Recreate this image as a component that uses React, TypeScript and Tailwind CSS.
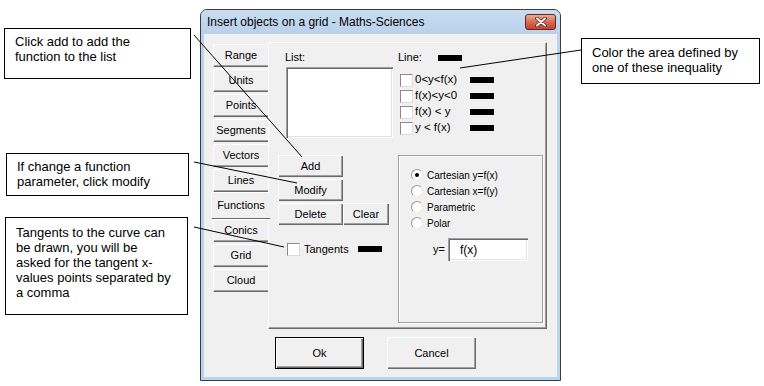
const raised =
  'bg-[#f0f0f0] shadow-[inset_1px_1px_0_#ffffff,inset_-1px_-1px_0_#696969,inset_-2px_-2px_0_#a0a0a0]';
const sunken =
  'bg-white shadow-[inset_1px_1px_0_#a0a0a0,inset_2px_2px_0_#696969,inset_-1px_-1px_0_#ffffff,inset_-2px_-2px_0_#e3e3e3]';

const tabs = ['Range', 'Units', 'Points', 'Segments', 'Vectors', 'Lines', 'Functions', 'Conics', 'Grid', 'Cloud'];

function Callout({ lines, className }: { lines: string[]; className: string }) {
  return (
    <div className={`border border-black bg-white text-[13px] leading-[15px] text-black ${className}`}>
      {lines.map((l) => (
        <div key={l} className="whitespace-nowrap">
          {l}
        </div>
      ))}
    </div>
  );
}

function Check() {
  return <div className="w-[13px] h-[13px] shrink-0 bg-white border border-[#8a8a8a] border-r-[#dcdcdc] border-b-[#dcdcdc]" />;
}

function Swatch({ className = '' }: { className?: string }) {
  return <div className={`w-[24px] h-[6px] bg-black shrink-0 ${className}`} />;
}

function Radio({ checked = false }: { checked?: boolean }) {
  return (
    <div className="w-[12px] h-[12px] shrink-0 rounded-full bg-white border border-[#9a9a9a] border-r-[#e8e8e8] border-b-[#e8e8e8] flex items-center justify-center">
      {checked && <div className="w-[4px] h-[4px] rounded-full bg-black" />}
    </div>
  );
}

function Btn({ label, className = '' }: { label: string; className?: string }) {
  return (
    <div className={`${raised} flex items-center justify-center text-[11px] ${className}`}>{label}</div>
  );
}

export default function App() {
  return (
    <div className="relative w-[764px] h-[386px] bg-white overflow-hidden flex font-['Liberation_Sans',Arial,sans-serif] text-black">
      {/* left callouts */}
      <div className="w-[200px] shrink-0 flex flex-col">
        <Callout
          className="ml-[4px] mt-[28px] w-[187px] h-[51px] pl-[10px] pt-[5px]"
          lines={['Click add to add the', 'function to the list']}
        />
        <Callout
          className="ml-[6px] mt-[74px] w-[183px] h-[43px] pl-[10px] pt-[5px]"
          lines={['If change a function', 'parameter, click modify']}
        />
        <Callout
          className="ml-[5px] mt-[21px] w-[183px] h-[98px] pl-[10px] pt-[7px]"
          lines={['Tangents to the curve can', 'be drawn, you will be', 'asked for the tangent x-', 'values points separated by', 'a comma']}
        />
      </div>

      {/* dialog window */}
      <div className="mt-[9px] w-[361px] h-[372px] shrink-0 flex flex-col border border-[#3b3b3b] rounded-t-[7px] bg-[#bcd3ec]">
        <div className="h-[24px] flex items-center pl-[6px] pr-[4px] bg-gradient-to-b from-[#c9dcf1] to-[#bad1eb] rounded-t-[6px]">
          <span className="text-[12px]">Insert objects on a grid - Maths-Sciences</span>
          <div className="ml-auto w-[31px] h-[16px] rounded-[3px] border border-[#6b2418] bg-gradient-to-b from-[#e9ab98] via-[#d56a53] to-[#c2432f] flex items-center justify-center">
            <svg width="14" height="10" viewBox="0 0 14 10">
              <path d="M3 1.5 L11 8.5 M11 1.5 L3 8.5" stroke="#5a1d14" strokeWidth="3.6" strokeLinecap="round" />
              <path d="M3 1.5 L11 8.5 M11 1.5 L3 8.5" stroke="#ffffff" strokeWidth="2" strokeLinecap="round" />
            </svg>
          </div>
        </div>

        <div className="mx-[3px] mb-[3px] flex-1 bg-[#f0f0f0] flex flex-col">
          <div className="flex items-start pl-[9px] pt-[8px]">
            {/* tabs */}
            <div className="w-[55px] mt-[2px] flex flex-col gap-[2px] shrink-0">
              {tabs.map((t) =>
                t === 'Functions' ? (
                  <div
                    key={t}
                    className="relative z-10 -my-[2px] -ml-[2px] -mr-[2px] h-[27px] bg-[#f0f0f0] border-t border-l border-white border-b border-b-[#696969] rounded-tl-[2px] flex items-center justify-center text-[11px]"
                  >
                    {t}
                  </div>
                ) : (
                  <div
                    key={t}
                    className="h-[23px] bg-[#f0f0f0] border-t border-l border-white border-b border-b-[#696969] shadow-[inset_0_-1px_0_#a0a0a0] rounded-tl-[2px] flex items-center justify-center text-[11px]"
                  >
                    {t}
                  </div>
                )
              )}
            </div>

            {/* page */}
            <div className="w-[279px] h-[287px] border border-white border-r-[#696969] border-b-[#696969] shadow-[inset_-1px_-1px_0_#a0a0a0] pl-[9px] text-[11px]">
              <div className="flex h-[112px]">
                <div className="w-[120px] shrink-0">
                  <div className="mt-[8px] pl-[7px] h-[13px] leading-[13px]">List:</div>
                  <div className={`mt-[3px] ml-[8px] w-[107px] h-[71px] ${sunken}`} />
                </div>
                <div>
                  <div className="mt-[8px] h-[13px] flex items-center">
                    <span className="w-[40px]">Line:</span>
                    <Swatch />
                  </div>
                  <div className="mt-[8px] flex flex-col">
                    {['0<y<f(x)', 'f(x)<y<0', 'f(x) < y', 'y < f(x)'].map((l) => (
                      <div key={l} className="h-[16px] flex items-center pl-[2px]">
                        <Check />
                        <span className="ml-[2px] w-[55px] text-[11.5px] whitespace-pre">{l}</span>
                        <Swatch />
                      </div>
                    ))}
                  </div>
                </div>
              </div>

              <div className="flex">
                <div className="w-[120px] shrink-0 flex flex-col">
                  <div className="flex flex-col gap-[2px]">
                    <Btn label="Add" className="w-[65px] h-[22px]" />
                    <Btn label="Modify" className="w-[65px] h-[22px]" />
                    <div className="flex">
                      <Btn label="Delete" className="w-[65px] h-[22px]" />
                      <Btn label="Clear" className="w-[46px] h-[22px]" />
                    </div>
                  </div>
                  <div className="mt-[16px] ml-[9px] flex items-center">
                    <Check />
                    <span className="ml-[4px] w-[54px]">Tangents</span>
                    <Swatch />
                  </div>
                </div>

                <div className="w-[145px] h-[168px] border border-[#a0a0a0] shadow-[inset_1px_1px_0_#ffffff,1px_1px_0_#ffffff] pl-[12px] pt-[11px]">
                  {['Cartesian y=f(x)', 'Cartesian x=f(y)', 'Parametric', 'Polar'].map((l, i) => (
                    <div key={l} className="h-[16px] flex items-center">
                      <Radio checked={i === 0} />
                      <span className="ml-[4px] text-[10px]">{l}</span>
                    </div>
                  ))}
                  <div className="mt-[7px] flex items-center">
                    <span className="ml-[22px] w-[15px]">y=</span>
                    <div className={`w-[80px] h-[23px] ${sunken} flex items-center pl-[12px] text-[12px]`}>f(x)</div>
                  </div>
                </div>
              </div>
            </div>
          </div>

          {/* ok / cancel */}
          <div className="flex pl-[71px] mt-[8px]">
            <div className="w-[89px] h-[32px] border border-black">
              <Btn label="Ok" className="w-full h-full" />
            </div>
            <Btn label="Cancel" className="ml-[23px] w-[89px] h-[32px]" />
          </div>
        </div>
      </div>

      {/* right callout */}
      <Callout
        className="ml-[20px] mt-[38px] w-[179px] h-[46px] pl-[10px] pt-[6px] shrink-0"
        lines={['Color the area  defined by', 'one of these inequality']}
      />

      {/* leader lines */}
      <svg className="absolute inset-0 pointer-events-none" width="764" height="386" viewBox="0 0 764 386">
        <g stroke="#000" strokeWidth="1">
          <line x1="194" y1="35" x2="302" y2="157" />
          <line x1="460" y1="68" x2="581" y2="50" />
          <line x1="194" y1="162" x2="297" y2="183" />
          <line x1="194" y1="227" x2="284" y2="247" />
        </g>
      </svg>
    </div>
  );
}
